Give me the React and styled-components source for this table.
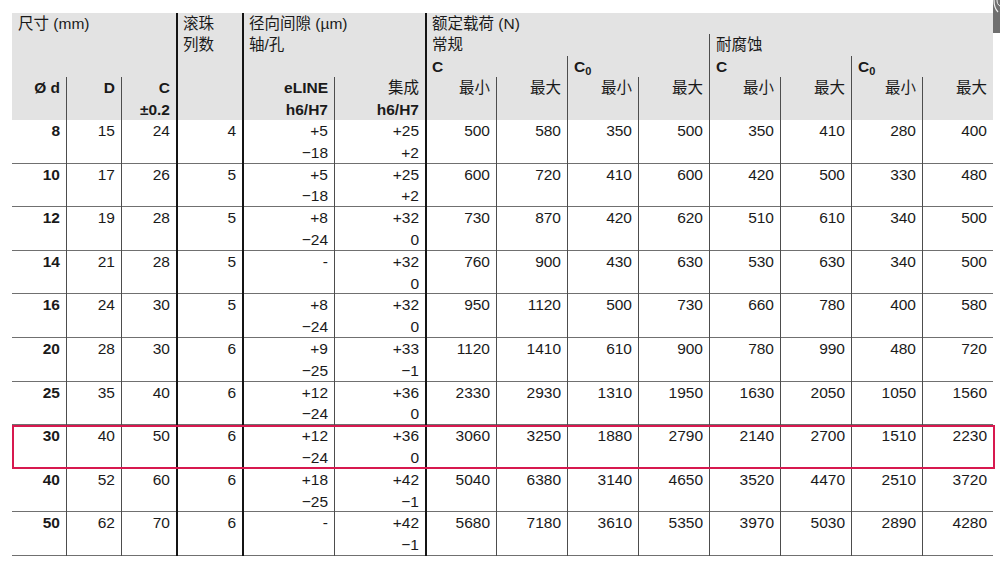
import React from 'react';
import styled, { createGlobalStyle, css } from 'styled-components';

const COLS = '54px 55px 55px 66px 92px 91px repeat(8, 71px)';

const Global = createGlobalStyle`
  html, body { margin: 0; padding: 0; background: #fff; }
  body {
    font-family: "Liberation Sans", "Noto Sans CJK SC", sans-serif;
    color: #1a1a1a;
  }
`;

const Page = styled.div`
  position: relative;
  width: 1000px;
  height: 569px;
  overflow: hidden;
  box-sizing: border-box;
  padding: 13px 0 0 12px;
`;

const Table = styled.div`
  width: 981px;
`;

const lineStyles = {
  thick: css`border-left: 2px solid #141414;`,
  thin: css`border-left: 1px solid #4d4d4d;`,
};

const Header = styled.div`
  display: grid;
  grid-template-columns: ${COLS};
  grid-template-rows: repeat(5, 21.4px);
  background: #e3e3e3;
`;

const HCell = styled.div`
  grid-column: ${(p) => p.$col};
  grid-row: ${(p) => p.$row};
  ${(p) => p.$line && lineStyles[p.$line]}
  padding: 0 6px 0 ${(p) => (p.$line === 'thick' ? 5 : 6)}px;
  font-size: 15.5px;
  line-height: 21.4px;
  font-weight: ${(p) => (p.$bold ? 700 : 400)};
  text-align: ${(p) => p.$align || 'left'};
  white-space: nowrap;
`;

const B = styled.span`
  font-weight: 700;
`;

const Sub = styled.sub`
  font-size: 11px;
  vertical-align: -3px;
  line-height: 0;
`;

const Row = styled.div`
  position: relative;
  display: grid;
  grid-template-columns: ${COLS};
  height: 43.6px;
  box-sizing: border-box;
  border-bottom: 1.5px solid #707070;
  ${(p) =>
    p.$highlight &&
    css`
      &::after {
        content: '';
        position: absolute;
        left: 0;
        right: -2px;
        top: 0;
        bottom: -1px;
        border: 2px solid #d7194f;
        pointer-events: none;
      }
    `}
`;

const Cell = styled.div`
  ${(p) => p.$line && lineStyles[p.$line]}
  padding: 0 6px;
  text-align: right;
  font-size: 15.5px;
  line-height: 21.8px;
  font-weight: ${(p) => (p.$bold ? 700 : 400)};
  white-space: nowrap;
`;

const Corner = styled.svg`
  position: absolute;
  top: 0;
  right: 0;
`;

const LINES = [null, 'thin', 'thin', 'thick', 'thick', 'thin', 'thick', 'thin', 'thin', 'thin', 'thin', 'thin', 'thin', 'thin'];

const DATA = [
  ['8', '15', '24', '4', ['+5', '−18'], ['+25', '+2'], 500, 580, 350, 500, 350, 410, 280, 400],
  ['10', '17', '26', '5', ['+5', '−18'], ['+25', '+2'], 600, 720, 410, 600, 420, 500, 330, 480],
  ['12', '19', '28', '5', ['+8', '−24'], ['+32', '0'], 730, 870, 420, 620, 510, 610, 340, 500],
  ['14', '21', '28', '5', ['-'], ['+32', '0'], 760, 900, 430, 630, 530, 630, 340, 500],
  ['16', '24', '30', '5', ['+8', '−24'], ['+32', '0'], 950, 1120, 500, 730, 660, 780, 400, 580],
  ['20', '28', '30', '6', ['+9', '−25'], ['+33', '−1'], 1120, 1410, 610, 900, 780, 990, 480, 720],
  ['25', '35', '40', '6', ['+12', '−24'], ['+36', '0'], 2330, 2930, 1310, 1950, 1630, 2050, 1050, 1560],
  ['30', '40', '50', '6', ['+12', '−24'], ['+36', '0'], 3060, 3250, 1880, 2790, 2140, 2700, 1510, 2230],
  ['40', '52', '60', '6', ['+18', '−25'], ['+42', '−1'], 5040, 6380, 3140, 4650, 3520, 4470, 2510, 3720],
  ['50', '62', '70', '6', ['-'], ['+42', '−1'], 5680, 7180, 3610, 5350, 3970, 5030, 2890, 4280],
];

function renderValue(v) {
  if (Array.isArray(v)) {
    return v.map((s, i) => (
      <React.Fragment key={i}>
        {i > 0 && <br />}
        {s}
      </React.Fragment>
    ));
  }
  return v;
}

export default function App() {
  const loadHeads = [];
  for (let i = 0; i < 8; i++) {
    loadHeads.push(
      <HCell key={i} $col={`${7 + i} / ${8 + i}`} $row="4 / 6" $line={i === 0 ? 'thick' : 'thin'} $align="right">
        {i % 2 === 0 ? '最小' : '最大'}
      </HCell>
    );
  }
  return (
    <Page>
      <Global />
      <Table>
        <Header>
          <HCell $col="1 / 4" $row="1 / 4">尺寸 (mm)</HCell>
          <HCell $col="1 / 2" $row="4 / 6" $align="right" $bold>Ø d</HCell>
          <HCell $col="2 / 3" $row="4 / 6" $align="right" $bold $line="thin">D</HCell>
          <HCell $col="3 / 4" $row="4 / 6" $align="right" $bold $line="thin">C<br />±0.2</HCell>
          <HCell $col="4 / 5" $row="1 / 6" $line="thick">滚珠<br />列数</HCell>
          <HCell $col="5 / 7" $row="1 / 4" $line="thick">径向间隙 (µm)<br />轴/孔</HCell>
          <HCell $col="5 / 6" $row="4 / 6" $align="right" $bold $line="thick">eLINE<br />h6/H7</HCell>
          <HCell $col="6 / 7" $row="4 / 6" $align="right" $line="thin">集成<br /><B>h6/H7</B></HCell>
          <HCell $col="7 / 15" $row="1 / 2" $line="thick">额定载荷 (N)</HCell>
          <HCell $col="7 / 11" $row="2 / 3" $line="thick">常规</HCell>
          <HCell $col="11 / 15" $row="2 / 3" $line="thin">耐腐蚀</HCell>
          <HCell $col="7 / 9" $row="3 / 4" $line="thick" $bold>C</HCell>
          <HCell $col="9 / 11" $row="3 / 4" $line="thin" $bold>C<Sub>0</Sub></HCell>
          <HCell $col="11 / 13" $row="3 / 4" $line="thin" $bold>C</HCell>
          <HCell $col="13 / 15" $row="3 / 4" $line="thin" $bold>C<Sub>0</Sub></HCell>
          {loadHeads}
        </Header>
        {DATA.map((row, r) => (
          <Row key={r} $highlight={row[0] === '30'}>
            {row.map((v, c) => (
              <Cell key={c} $line={LINES[c]} $bold={c === 0}>
                {renderValue(v)}
              </Cell>
            ))}
          </Row>
        ))}
      </Table>
      <Corner width="7" height="34" viewBox="0 0 7 34">
        <rect x="0" y="0" width="7" height="33" fill="#6f6f6f" />
        <path d="M1 0 C1 6 2 9 5 12" stroke="#f2f2f2" strokeWidth="1.2" fill="none" />
        <path d="M4 0 C4 3 5 5 7 6" stroke="#f2f2f2" strokeWidth="1" fill="none" />
      </Corner>
    </Page>
  );
}
